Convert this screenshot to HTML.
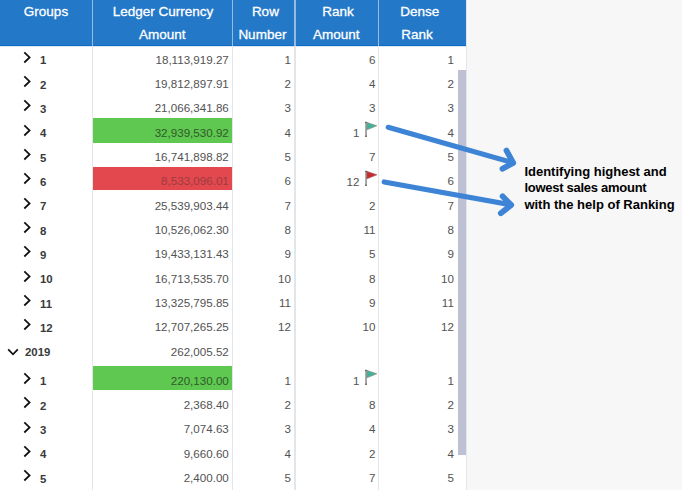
<!DOCTYPE html>
<html><head><meta charset="utf-8"><title>Ranking</title>
<style>
html,body{margin:0;padding:0;}
body{width:682px;height:490px;overflow:hidden;background:#f7f7f7;font-family:"Liberation Sans",sans-serif;position:relative;}
#grid{position:absolute;left:0;top:0;width:466px;height:490px;background:#fff;overflow:hidden;border-right:1px solid #e3e5ec;}
#hdbg{position:absolute;left:0;top:0;width:466px;height:45px;background:#2478c8;}
#hdl1{position:absolute;left:0;top:45px;width:466px;height:1px;background:#0f69c6;}
#hdl2{position:absolute;left:0;top:46px;width:466px;height:1px;background:#d8e6f5;}
.ht{position:absolute;color:#fff;-webkit-text-stroke:0.3px #fff;font-size:13.5px;line-height:14px;height:14px;text-align:center;white-space:nowrap;}
.vl{position:absolute;top:47px;width:1.4px;height:444px;background:#e2e5ea;}
.vlh{position:absolute;top:0;width:1.4px;height:46px;background:#98badf;}
.r{position:absolute;left:0;width:466px;}
.t{position:absolute;font-size:11.6px;line-height:14px;height:14px;color:#525252;text-align:right;white-space:nowrap;}
.lab{position:absolute;font-weight:bold;font-size:11.4px;line-height:14px;height:14px;color:#3a3a3a;white-space:nowrap;}
.ic{position:absolute;}
.hl{position:absolute;left:93px;width:139.3px;}
.g{background:#5fc850;}
.rd{background:#e2484d;}
#sb{position:absolute;left:458.4px;top:70px;width:7.6px;height:385.4px;background:#bec0d3;}
.nt{position:absolute;left:524.4px;font-weight:bold;font-size:13px;line-height:16px;height:16px;color:#000;white-space:nowrap;transform-origin:0 50%;}
</style></head><body>
<div id="grid">
<div id="hdbg"></div><div id="hdl1"></div><div id="hdl2"></div>

<div class="ht" style="left:0.0px;width:92px;top:4.52px">Groups</div>
<div class="ht" style="left:93.6px;width:139px;top:4.52px">Ledger Currency</div>
<div class="ht" style="left:92.8px;width:139px;top:27.82px">Amount</div>
<div class="ht" style="left:234.4px;width:62px;top:4.52px">Row</div>
<div class="ht" style="left:231.4px;width:62px;top:27.82px">Number</div>
<div class="ht" style="left:297.0px;width:82px;top:4.52px">Rank</div>
<div class="ht" style="left:295.2px;width:82px;top:27.82px">Amount</div>
<div class="ht" style="left:378.3px;width:83px;top:4.52px">Dense</div>
<div class="ht" style="left:375.6px;width:83px;top:27.82px">Rank</div>
<div class="vl" style="left:92px"></div><div class="vlh" style="left:92px"></div>
<div class="vl" style="left:232px"></div><div class="vlh" style="left:232px"></div>
<div class="vl" style="left:294.4px"></div><div class="vlh" style="left:294.4px"></div>
<div class="vl" style="left:378px"></div><div class="vlh" style="left:378px"></div>
<div class="r" style="top:45.40px;height:24.33px">
<svg class="ic" style="left:21.7px;top:5.40px" width="11" height="13" viewBox="0 0 11 13"><path d="M2.3 1.3 L7.6 6.4 L2.3 11.5" fill="none" stroke="#111" stroke-width="1.75"/></svg>
<span class="lab" style="left:40px;top:7.85px">1</span>
<span class="t" style="left:93px;width:135.8px;top:7.18px;">18,113,919.27</span>
<span class="t" style="left:233px;width:58px;top:7.18px">1</span>
<span class="t" style="left:296px;width:79.5px;top:7.18px">6</span>
<span class="t" style="left:379px;width:74.9px;top:7.18px">1</span>
</div>
<div class="r" style="top:69.73px;height:24.33px">
<svg class="ic" style="left:21.7px;top:5.40px" width="11" height="13" viewBox="0 0 11 13"><path d="M2.3 1.3 L7.6 6.4 L2.3 11.5" fill="none" stroke="#111" stroke-width="1.75"/></svg>
<span class="lab" style="left:40px;top:7.85px">2</span>
<span class="t" style="left:93px;width:135.8px;top:7.18px;">19,812,897.91</span>
<span class="t" style="left:233px;width:58px;top:7.18px">2</span>
<span class="t" style="left:296px;width:79.5px;top:7.18px">4</span>
<span class="t" style="left:379px;width:74.9px;top:7.18px">2</span>
</div>
<div class="r" style="top:94.06px;height:24.33px">
<svg class="ic" style="left:21.7px;top:5.40px" width="11" height="13" viewBox="0 0 11 13"><path d="M2.3 1.3 L7.6 6.4 L2.3 11.5" fill="none" stroke="#111" stroke-width="1.75"/></svg>
<span class="lab" style="left:40px;top:7.85px">3</span>
<span class="t" style="left:93px;width:135.8px;top:7.18px;">21,066,341.86</span>
<span class="t" style="left:233px;width:58px;top:7.18px">3</span>
<span class="t" style="left:296px;width:79.5px;top:7.18px">3</span>
<span class="t" style="left:379px;width:74.9px;top:7.18px">3</span>
</div>
<div class="r" style="top:118.39px;height:24.33px">
<div class="hl g" style="top:-0.39px;height:24.50px"></div>
<svg class="ic" style="left:21.7px;top:5.40px" width="11" height="13" viewBox="0 0 11 13"><path d="M2.3 1.3 L7.6 6.4 L2.3 11.5" fill="none" stroke="#111" stroke-width="1.75"/></svg>
<span class="lab" style="left:40px;top:7.85px">4</span>
<span class="t" style="left:93px;width:135.8px;top:7.18px;color:#2f5a2a;">32,939,530.92</span>
<span class="t" style="left:233px;width:58px;top:7.18px">4</span>
<span class="t" style="left:296px;width:63.4px;top:7.48px">1</span>
<svg class="ic" style="left:364px;top:2.60px" width="15" height="17" viewBox="0 0 15 17"><rect x="1.3" y="1" width="1.5" height="14.8" fill="#8a8a8a"/><rect x="1.3" y="0.8" width="1.5" height="1.2" fill="#4a4a4a"/><rect x="1.3" y="14.6" width="1.5" height="1.2" fill="#4a4a4a"/><path d="M2.9 1.4 L12.8 4.8 L2.9 8.8 Z" fill="#3db39b" stroke="#8f8a80" stroke-width="0.7" stroke-linejoin="round"/></svg>
<span class="t" style="left:379px;width:74.9px;top:7.18px">4</span>
</div>
<div class="r" style="top:142.72px;height:24.33px">
<svg class="ic" style="left:21.7px;top:5.40px" width="11" height="13" viewBox="0 0 11 13"><path d="M2.3 1.3 L7.6 6.4 L2.3 11.5" fill="none" stroke="#111" stroke-width="1.75"/></svg>
<span class="lab" style="left:40px;top:7.85px">5</span>
<span class="t" style="left:93px;width:135.8px;top:7.18px;">16,741,898.82</span>
<span class="t" style="left:233px;width:58px;top:7.18px">5</span>
<span class="t" style="left:296px;width:79.5px;top:7.18px">7</span>
<span class="t" style="left:379px;width:74.9px;top:7.18px">5</span>
</div>
<div class="r" style="top:167.05px;height:24.33px">
<div class="hl rd" style="top:0.15px;height:23.30px"></div>
<svg class="ic" style="left:21.7px;top:5.40px" width="11" height="13" viewBox="0 0 11 13"><path d="M2.3 1.3 L7.6 6.4 L2.3 11.5" fill="none" stroke="#111" stroke-width="1.75"/></svg>
<span class="lab" style="left:40px;top:7.85px">6</span>
<span class="t" style="left:93px;width:135.8px;top:7.18px;color:#9c3d42;">8,533,096.01</span>
<span class="t" style="left:233px;width:58px;top:7.18px">6</span>
<span class="t" style="left:296px;width:63.4px;top:7.48px">12</span>
<svg class="ic" style="left:364px;top:2.60px" width="15" height="17" viewBox="0 0 15 17"><rect x="1.3" y="1" width="1.5" height="14.8" fill="#8a8a8a"/><rect x="1.3" y="0.8" width="1.5" height="1.2" fill="#4a4a4a"/><rect x="1.3" y="14.6" width="1.5" height="1.2" fill="#4a4a4a"/><path d="M2.9 1.4 L12.8 4.8 L2.9 8.8 Z" fill="#c62a2e" stroke="#a2524e" stroke-width="0.7" stroke-linejoin="round"/></svg>
<span class="t" style="left:379px;width:74.9px;top:7.18px">6</span>
</div>
<div class="r" style="top:191.38px;height:24.33px">
<svg class="ic" style="left:21.7px;top:5.40px" width="11" height="13" viewBox="0 0 11 13"><path d="M2.3 1.3 L7.6 6.4 L2.3 11.5" fill="none" stroke="#111" stroke-width="1.75"/></svg>
<span class="lab" style="left:40px;top:7.85px">7</span>
<span class="t" style="left:93px;width:135.8px;top:7.18px;">25,539,903.44</span>
<span class="t" style="left:233px;width:58px;top:7.18px">7</span>
<span class="t" style="left:296px;width:79.5px;top:7.18px">2</span>
<span class="t" style="left:379px;width:74.9px;top:7.18px">7</span>
</div>
<div class="r" style="top:215.71px;height:24.33px">
<svg class="ic" style="left:21.7px;top:5.40px" width="11" height="13" viewBox="0 0 11 13"><path d="M2.3 1.3 L7.6 6.4 L2.3 11.5" fill="none" stroke="#111" stroke-width="1.75"/></svg>
<span class="lab" style="left:40px;top:7.85px">8</span>
<span class="t" style="left:93px;width:135.8px;top:7.18px;">10,526,062.30</span>
<span class="t" style="left:233px;width:58px;top:7.18px">8</span>
<span class="t" style="left:296px;width:79.5px;top:7.18px">11</span>
<span class="t" style="left:379px;width:74.9px;top:7.18px">8</span>
</div>
<div class="r" style="top:240.04px;height:24.33px">
<svg class="ic" style="left:21.7px;top:5.40px" width="11" height="13" viewBox="0 0 11 13"><path d="M2.3 1.3 L7.6 6.4 L2.3 11.5" fill="none" stroke="#111" stroke-width="1.75"/></svg>
<span class="lab" style="left:40px;top:7.85px">9</span>
<span class="t" style="left:93px;width:135.8px;top:7.18px;">19,433,131.43</span>
<span class="t" style="left:233px;width:58px;top:7.18px">9</span>
<span class="t" style="left:296px;width:79.5px;top:7.18px">5</span>
<span class="t" style="left:379px;width:74.9px;top:7.18px">9</span>
</div>
<div class="r" style="top:264.37px;height:24.33px">
<svg class="ic" style="left:21.7px;top:5.40px" width="11" height="13" viewBox="0 0 11 13"><path d="M2.3 1.3 L7.6 6.4 L2.3 11.5" fill="none" stroke="#111" stroke-width="1.75"/></svg>
<span class="lab" style="left:40px;top:7.85px">10</span>
<span class="t" style="left:93px;width:135.8px;top:7.18px;">16,713,535.70</span>
<span class="t" style="left:233px;width:58px;top:7.18px">10</span>
<span class="t" style="left:296px;width:79.5px;top:7.18px">8</span>
<span class="t" style="left:379px;width:74.9px;top:7.18px">10</span>
</div>
<div class="r" style="top:288.70px;height:24.33px">
<svg class="ic" style="left:21.7px;top:5.40px" width="11" height="13" viewBox="0 0 11 13"><path d="M2.3 1.3 L7.6 6.4 L2.3 11.5" fill="none" stroke="#111" stroke-width="1.75"/></svg>
<span class="lab" style="left:40px;top:7.85px">11</span>
<span class="t" style="left:93px;width:135.8px;top:7.18px;">13,325,795.85</span>
<span class="t" style="left:233px;width:58px;top:7.18px">11</span>
<span class="t" style="left:296px;width:79.5px;top:7.18px">9</span>
<span class="t" style="left:379px;width:74.9px;top:7.18px">11</span>
</div>
<div class="r" style="top:313.03px;height:24.33px">
<svg class="ic" style="left:21.7px;top:5.40px" width="11" height="13" viewBox="0 0 11 13"><path d="M2.3 1.3 L7.6 6.4 L2.3 11.5" fill="none" stroke="#111" stroke-width="1.75"/></svg>
<span class="lab" style="left:40px;top:7.85px">12</span>
<span class="t" style="left:93px;width:135.8px;top:7.18px;">12,707,265.25</span>
<span class="t" style="left:233px;width:58px;top:7.18px">12</span>
<span class="t" style="left:296px;width:79.5px;top:7.18px">10</span>
<span class="t" style="left:379px;width:74.9px;top:7.18px">12</span>
</div>
<div class="r" style="top:337.36px;height:29.1px">
<svg class="ic" style="left:6px;top:9.20px" width="14" height="10" viewBox="0 0 14 10"><path d="M2.2 2.3 L7 7.3 L11.8 2.3" fill="none" stroke="#111" stroke-width="1.75"/></svg>
<span class="lab" style="left:25px;top:7.85px">2019</span>
<span class="t" style="left:93px;width:135.8px;top:7.18px;">262,005.52</span>
<span class="t" style="left:233px;width:58px;top:7.18px"></span>
<span class="t" style="left:296px;width:79.5px;top:7.18px"></span>
<span class="t" style="left:379px;width:74.9px;top:7.18px"></span>
</div>
<div class="r" style="top:366.46px;height:24.33px">
<div class="hl g" style="top:-0.36px;height:23.90px"></div>
<svg class="ic" style="left:21.7px;top:5.40px" width="11" height="13" viewBox="0 0 11 13"><path d="M2.3 1.3 L7.6 6.4 L2.3 11.5" fill="none" stroke="#111" stroke-width="1.75"/></svg>
<span class="lab" style="left:40px;top:7.85px">1</span>
<span class="t" style="left:93px;width:135.8px;top:7.18px;color:#2f5a2a;">220,130.00</span>
<span class="t" style="left:233px;width:58px;top:7.18px">1</span>
<span class="t" style="left:296px;width:63.4px;top:7.48px">1</span>
<svg class="ic" style="left:364px;top:2.60px" width="15" height="17" viewBox="0 0 15 17"><rect x="1.3" y="1" width="1.5" height="14.8" fill="#8a8a8a"/><rect x="1.3" y="0.8" width="1.5" height="1.2" fill="#4a4a4a"/><rect x="1.3" y="14.6" width="1.5" height="1.2" fill="#4a4a4a"/><path d="M2.9 1.4 L12.8 4.8 L2.9 8.8 Z" fill="#3db39b" stroke="#8f8a80" stroke-width="0.7" stroke-linejoin="round"/></svg>
<span class="t" style="left:379px;width:74.9px;top:7.18px">1</span>
</div>
<div class="r" style="top:390.79px;height:24.33px">
<svg class="ic" style="left:21.7px;top:5.40px" width="11" height="13" viewBox="0 0 11 13"><path d="M2.3 1.3 L7.6 6.4 L2.3 11.5" fill="none" stroke="#111" stroke-width="1.75"/></svg>
<span class="lab" style="left:40px;top:7.85px">2</span>
<span class="t" style="left:93px;width:135.8px;top:7.18px;">2,368.40</span>
<span class="t" style="left:233px;width:58px;top:7.18px">2</span>
<span class="t" style="left:296px;width:79.5px;top:7.18px">8</span>
<span class="t" style="left:379px;width:74.9px;top:7.18px">2</span>
</div>
<div class="r" style="top:415.12px;height:24.33px">
<svg class="ic" style="left:21.7px;top:5.40px" width="11" height="13" viewBox="0 0 11 13"><path d="M2.3 1.3 L7.6 6.4 L2.3 11.5" fill="none" stroke="#111" stroke-width="1.75"/></svg>
<span class="lab" style="left:40px;top:7.85px">3</span>
<span class="t" style="left:93px;width:135.8px;top:7.18px;">7,074.63</span>
<span class="t" style="left:233px;width:58px;top:7.18px">3</span>
<span class="t" style="left:296px;width:79.5px;top:7.18px">4</span>
<span class="t" style="left:379px;width:74.9px;top:7.18px">3</span>
</div>
<div class="r" style="top:439.45px;height:24.33px">
<svg class="ic" style="left:21.7px;top:5.40px" width="11" height="13" viewBox="0 0 11 13"><path d="M2.3 1.3 L7.6 6.4 L2.3 11.5" fill="none" stroke="#111" stroke-width="1.75"/></svg>
<span class="lab" style="left:40px;top:7.85px">4</span>
<span class="t" style="left:93px;width:135.8px;top:7.18px;">9,660.60</span>
<span class="t" style="left:233px;width:58px;top:7.18px">4</span>
<span class="t" style="left:296px;width:79.5px;top:7.18px">2</span>
<span class="t" style="left:379px;width:74.9px;top:7.18px">4</span>
</div>
<div class="r" style="top:463.78px;height:24.33px">
<svg class="ic" style="left:21.7px;top:5.40px" width="11" height="13" viewBox="0 0 11 13"><path d="M2.3 1.3 L7.6 6.4 L2.3 11.5" fill="none" stroke="#111" stroke-width="1.75"/></svg>
<span class="lab" style="left:40px;top:7.85px">5</span>
<span class="t" style="left:93px;width:135.8px;top:7.18px;">2,400.00</span>
<span class="t" style="left:233px;width:58px;top:7.18px">5</span>
<span class="t" style="left:296px;width:79.5px;top:7.18px">7</span>
<span class="t" style="left:379px;width:74.9px;top:7.18px">5</span>
</div>
<div id="sb"></div>
</div>
<svg style="position:absolute;left:0;top:0" width="682" height="490" viewBox="0 0 682 490">
<g fill="none" stroke="#3d84d6" stroke-width="5.2" stroke-linecap="round" stroke-linejoin="round">
<path d="M388.2 127.3 L513 162.7"/><path stroke-width="5.8" d="M506.5 150.6 L513.2 162.9 L502.5 168.8"/>
<path d="M384.2 182 L511 204.8"/><path stroke-width="5.8" d="M502.6 196.3 L511.2 205 L500.8 213.2"/>
</g></svg>
<div class="nt" id="n0" style="top:164.40px;">Identifying highest and</div>
<div class="nt" id="n1" style="top:180.40px;letter-spacing:-0.27px;">lowest sales amount</div>
<div class="nt" id="n2" style="top:197.00px;">with the help of Ranking</div>
</body></html>
